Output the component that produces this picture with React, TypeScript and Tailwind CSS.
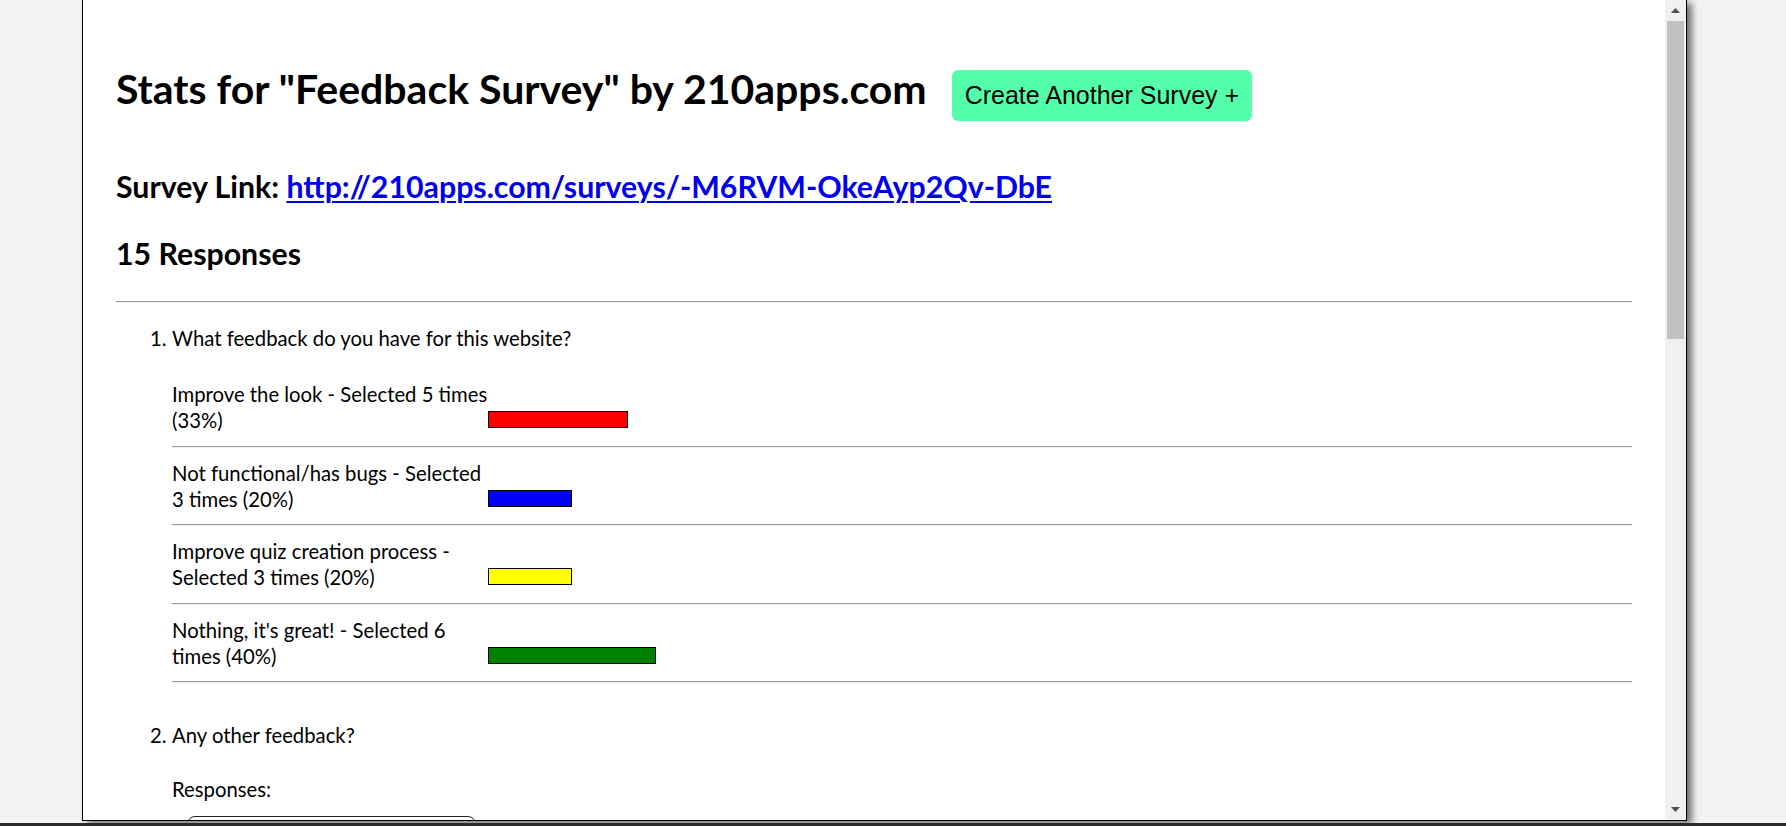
import React from 'react';

const options = [
  { lines: ['Improve the look - Selected 5 times', '(33%)'], pct: 33.3, color: 'bg-[#ff0000]' },
  { lines: ['Not functional/has bugs - Selected', '3 times (20%)'], pct: 20, color: 'bg-[#0000ff]' },
  { lines: ['Improve quiz creation process -', 'Selected 3 times (20%)'], pct: 20, color: 'bg-[#ffff00]' },
  { lines: ["Nothing, it's great! - Selected 6", 'times (40%)'], pct: 40, color: 'bg-[#008000]' },
];

function Rule() {
  return <div className="h-[2px] border-t border-[#9d9d9d] bg-[#eeeeee]" />;
}

function OptionRow({ lines, pct, color }: { lines: string[]; pct: number; color: string }) {
  return (
    <div>
      <div className="flex items-end pt-[12px] pb-[12.6px]">
        <div className="w-[316px] shrink-0 leading-[26px]">
          {lines.map((l) => (
            <div key={l} className="whitespace-nowrap">{l}</div>
          ))}
        </div>
        <div className={`h-[17px] mb-[5px] border border-black ${color}`} style={{ width: pct * 4.2 }} />
      </div>
      <Rule />
    </div>
  );
}

function Scrollbar() {
  return (
    <div className="w-[21px] shrink-0 bg-[#f0f0f0] flex flex-col items-center">
      <div className="h-[21px] flex items-center justify-center">
        <svg width="9" height="5" viewBox="0 0 9 5"><path d="M4.5 0L9 5H0z" fill="#505050" /></svg>
      </div>
      <div className="w-[17px] h-[318px] bg-[#c1c1c1]" />
      <div className="flex-1" />
      <div className="h-[21px] flex items-center justify-center">
        <svg width="9" height="5" viewBox="0 0 9 5"><path d="M0 0H9L4.5 5z" fill="#505050" /></svg>
      </div>
    </div>
  );
}

export default function App() {
  return (
    <div className="h-[826px] w-full bg-[#f3f3f3] flex flex-col overflow-hidden font-['Lato',sans-serif] text-black">
      <div className="h-[823px] pl-[82px]">
        <div className="w-[1605px] h-[821px] flex bg-white border-l border-r border-b border-black shadow-[5px_3px_7px_rgba(0,0,0,0.55)]">
          <main className="flex-1 overflow-hidden px-[33px] pt-[67px]">
            <div className="flex items-baseline gap-[25px]">
              <h1 className="text-[41px] leading-[44px] font-bold whitespace-nowrap">Stats for "Feedback Survey" by 210apps.com</h1>
              <button className="bg-[#55ffaa] rounded-[6px] px-[13px] py-[12px] font-['Liberation_Sans',Arial,sans-serif] text-[25px] leading-[27px] text-black whitespace-nowrap">
                Create Another Survey +
              </button>
            </div>
            <h2 className="mt-[48px] text-[30.3px] leading-[34px] font-bold">
              Survey Link:{' '}
              <a href="#" className="text-[#0000ee] underline decoration-2 underline-offset-[3px]">http://210apps.com/surveys/-M6RVM-OkeAyp2Qv-DbE</a>
            </h2>
            <h3 className="mt-[33px] text-[30.3px] leading-[34px] font-bold">15 Responses</h3>
            <div className="mt-[31px]">
              <Rule />
            </div>
            <div className="pl-[34px] text-[20.3px] leading-[26px]">
              <div className="flex mt-[22px]">
                <span className="w-[22px] shrink-0">1.</span>
                <div className="flex-1">
                  <div>What feedback do you have for this website?</div>
                  <div className="mt-[18px]">
                    {options.map((o) => (
                      <OptionRow key={o.lines[0]} {...o} />
                    ))}
                  </div>
                </div>
              </div>
              <div className="flex mt-[39px]">
                <span className="w-[22px] shrink-0">2.</span>
                <div className="flex-1">
                  <div>Any other feedback?</div>
                  <div className="mt-[28px]">Responses:</div>
                  <div className="mt-[14px] ml-[15px] w-[289px] h-[80px] border border-[#222] rounded-[8px]" />
                </div>
              </div>
            </div>
          </main>
          <Scrollbar />
        </div>
      </div>
      <div className="h-[3px] bg-[#2b2b2b]" />
    </div>
  );
}
